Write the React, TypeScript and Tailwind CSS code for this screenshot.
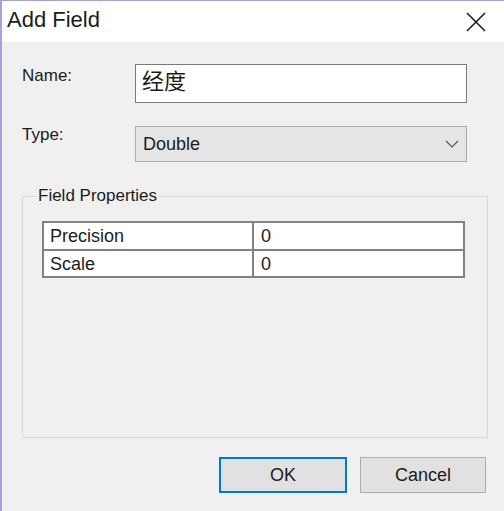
import React from 'react';

const font = { fontFamily: '"Liberation Sans", "Noto Sans CJK SC", sans-serif' };

const rows = [
  { name: 'Precision', value: '0' },
  { name: 'Scale', value: '0' },
];

export default function App() {
  return (
    <div
      className="w-[504px] h-[511px] bg-[#f0f0f0] border-l-2 border-t border-[#a7a1d9] text-[#1c1c1c] overflow-hidden"
      style={font}
    >
      {/* title bar */}
      <div className="flex h-[41px] bg-white items-start">
        <span className="ml-[5px] mt-[7px] text-[22px] leading-[24px]">Add Field</span>
        <svg className="ml-auto mr-[17px] mt-[10px]" width="22" height="22" viewBox="0 0 22 22">
          <path d="M2 2 L20 20 M20 2 L2 20" stroke="#1e1e1e" strokeWidth="1.6" />
        </svg>
      </div>

      <div className="pl-[20px]">
        {/* name */}
        <div className="flex mt-[22px]">
          <label className="w-[113px] mt-[2px] text-[17px] leading-[20px]">Name:</label>
          <div className="w-[332px] h-[39px] border border-[#7a7a7a] bg-white pl-[6px] pb-[4px] flex items-center text-[22px] leading-[26px]">
            经度
          </div>
        </div>

        {/* type */}
        <div className="flex mt-[23px]">
          <label className="w-[113px] -mt-px text-[17px] leading-[20px]">Type:</label>
          <div className="w-[332px] h-[36px] border border-[#adadad] bg-[#e5e5e5] px-[7px] flex items-center justify-between text-[18px] leading-[22px]">
            <span>Double</span>
            <svg width="14" height="8" viewBox="0 0 14 8">
              <path d="M1 1 L7 7 L13 1" fill="none" stroke="#555" strokeWidth="1.2" />
            </svg>
          </div>
        </div>

        {/* group box */}
        <fieldset className="mt-[24px] w-[466px] h-[252px] border border-[#d8d8d8]">
          <legend className="ml-[13px] px-[2px] text-[17px] leading-[20px]">Field Properties</legend>
          <div className="ml-[19px] mt-[15px] w-[423px] border-2 border-[#828282] bg-white text-[18px] leading-[22px]">
            {rows.map((row, i) => (
              <div
                key={row.name}
                className={`flex ${i > 0 ? 'h-[27px] border-t-2 border-[#828282]' : 'h-[26px]'}`}
              >
                <div className="w-[210px] pl-[6px] flex items-center border-r-2 border-[#828282]">{row.name}</div>
                <div className="flex-1 pl-[7px] flex items-center">{row.value}</div>
              </div>
            ))}
          </div>
        </fieldset>
      </div>

      {/* buttons */}
      <div className="flex justify-end gap-[13px] mt-[19px] pr-[18px]">
        <button className="w-[128px] h-[36px] border-2 border-[#0078d7] bg-[#e1e1e1] text-[18px]">OK</button>
        <button className="w-[126px] h-[36px] border border-[#adadad] bg-[#e1e1e1] text-[18px]">Cancel</button>
      </div>
    </div>
  );
}
